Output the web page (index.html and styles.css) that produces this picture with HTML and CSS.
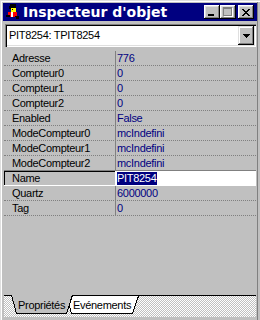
FILE: index.html
```html
<!DOCTYPE html>
<html lang="fr">
<head>
  <meta charset="UTF-8">
  <title>Inspecteur d'objet</title>
  <link rel="stylesheet" href="styles.css">
</head>
<body>
  <div class="window">
    <div class="titlebar">
      <svg class="app-icon" width="16" height="16" viewBox="0 0 16 16" shape-rendering="crispEdges">
        <rect x="6" y="0" width="6" height="4" fill="#000"/>
        <rect x="5" y="2" width="2" height="3" fill="#000"/>
        <rect x="7" y="4" width="5" height="4" fill="#ff0"/>
        <rect x="8" y="5" width="1" height="1" fill="#000"/>
        <rect x="4" y="8" width="9" height="5" fill="#f00"/>
        <rect x="7" y="8" width="2" height="5" fill="#fff"/>
        <rect x="2" y="11" width="4" height="2" fill="#000"/>
        <rect x="11" y="12" width="4" height="3" fill="#000"/>
        <rect x="6" y="13" width="6" height="3" fill="#000080"/>
      </svg>
      <span class="title">Inspecteur d'objet</span>
      <div class="caption-buttons">
        <div class="cap-btn"><span class="min-glyph"></span></div>
        <div class="cap-btn"><span class="max-glyph"></span></div>
        <div class="cap-btn close">
          <svg width="8" height="7" viewBox="0 0 8 7" shape-rendering="crispEdges">
            <path d="M0 0h2v1h-2zM6 0h2v1h-2zM1 1h2v1h-2zM5 1h2v1h-2zM2 2h4v1h-4zM3 3h2v1h-2zM2 4h4v1h-4zM1 5h2v1h-2zM5 5h2v1h-2zM0 6h2v1h-2zM6 6h2v1h-2z" fill="#000"/>
          </svg>
        </div>
      </div>
    </div>

    <div class="combo">
      <span class="combo-text">PIT8254: TPIT8254</span>
      <div class="combo-btn">
        <svg width="7" height="4" viewBox="0 0 7 4" shape-rendering="crispEdges">
          <path d="M0 0h7v1h-7zM1 1h5v1h-5zM2 2h3v1h-3zM3 3h1v1h-1z" fill="#000"/>
        </svg>
      </div>
    </div>

    <div class="grid">
      <div class="row"><span class="prop">Adresse</span><span class="val">776</span></div>
      <div class="row"><span class="prop">Compteur0</span><span class="val">0</span></div>
      <div class="row"><span class="prop">Compteur1</span><span class="val">0</span></div>
      <div class="row"><span class="prop">Compteur2</span><span class="val">0</span></div>
      <div class="row"><span class="prop">Enabled</span><span class="val">False</span></div>
      <div class="row"><span class="prop">ModeCompteur0</span><span class="val">mcIndefini</span></div>
      <div class="row"><span class="prop">ModeCompteur1</span><span class="val">mcIndefini</span></div>
      <div class="row"><span class="prop">ModeCompteur2</span><span class="val">mcIndefini</span></div>
      <div class="row selected"><span class="prop">Name</span><span class="val"><span class="sel">PIT8254</span></span></div>
      <div class="row"><span class="prop">Quartz</span><span class="val">6000000</span></div>
      <div class="row"><span class="prop">Tag</span><span class="val">0</span></div>
    </div>

    <div class="tabs">
      <svg class="tab-shapes" width="252" height="22" viewBox="0 0 252 22" shape-rendering="crispEdges">
        <rect x="0" y="0" width="252" height="1" fill="#000"/>
        <polygon points="62,1 135,1 129,19 67,19" fill="#fff"/>
        <polyline points="62.5,1 67.5,18.5 128.5,18.5 134.5,1" fill="none" stroke="#000"/>
        <polygon points="7,0 69,0 63,19 12,19" fill="#c0c0c0"/>
        <polyline points="7.5,0 12.5,18.5 62.5,18.5 68.5,0" fill="none" stroke="#000"/>
      </svg>
      <span class="tab first">Propriétés</span>
      <span class="tab">Evénements</span>
    </div>
  </div>
</body>
</html>
```

FILE: styles.css
```css
body {
  margin: 0;
  background: #c0c0c0;
  font-family: "Liberation Sans", Arial, sans-serif;
  font-size: 11px;
  letter-spacing: -0.3px;
  color: #000;
}

.window {
  width: 260px;
  height: 320px;
  box-sizing: border-box;
  padding: 3px;
  display: flex;
  flex-direction: column;
  background: #c0c0c0;
  box-shadow: inset 1px 1px 0 #dfdfdf, inset 2px 2px 0 #fff,
              inset -2px 0 0 #c0c0c0, inset -3px 0 0 #808080;
}

/* barre de titre */
.titlebar {
  height: 18px;
  display: flex;
  align-items: center;
  padding: 0 3px 0 1px;
  background: #000080;
  color: #fff;
}

.app-icon {
  margin-right: 3px;
  flex: none;
}

.title {
  font-family: "DejaVu Sans", sans-serif;
  font-weight: bold;
  font-size: 14px;
  letter-spacing: 0;
  line-height: 18px;
  white-space: nowrap;
}

.caption-buttons {
  margin-left: auto;
  display: flex;
}

.cap-btn {
  width: 16px;
  height: 14px;
  box-sizing: border-box;
  background: #c0c0c0;
  box-shadow: inset -1px -1px 0 #000, inset 1px 1px 0 #fff,
              inset -2px -2px 0 #808080, inset 2px 2px 0 #dfdfdf;
  position: relative;
  display: flex;
  align-items: center;
  justify-content: center;
}

.cap-btn.close {
  margin-left: 2px;
}

.min-glyph {
  position: absolute;
  left: 4px;
  top: 9px;
  width: 6px;
  height: 2px;
  background: #000;
}

.max-glyph {
  position: absolute;
  left: 3px;
  top: 2px;
  width: 9px;
  height: 9px;
  box-sizing: border-box;
  border: 1px solid #808080;
  border-top-width: 2px;
  box-shadow: 1px 1px 0 #fff;
}

/* liste des composants */
.combo {
  height: 23px;
  margin: 3px 1px 0 2px;
  padding: 2px;
  box-sizing: border-box;
  display: flex;
  background: #fff;
  box-shadow: inset 1px 1px 0 #808080, inset 2px 2px 0 #000,
              inset -1px -1px 0 #fff, inset -2px -2px 0 #dfdfdf;
}

.combo-text {
  flex: 1;
  padding-left: 2px;
  line-height: 19px;
}

.combo-btn {
  width: 16px;
  height: 19px;
  box-sizing: border-box;
  background: #c0c0c0;
  box-shadow: inset -1px -1px 0 #000, inset 1px 1px 0 #dfdfdf,
              inset -2px -2px 0 #808080, inset 2px 2px 0 #fff;
  display: flex;
  align-items: center;
  justify-content: center;
}

/* grille des propriétés */
.grid {
  flex: 1;
  margin: 0 1px;
  padding-top: 4px;
}

.row {
  display: flex;
  height: 15px;
  box-sizing: border-box;
  border-bottom: 1px dotted #808080;
  line-height: 14px;
}

.prop {
  width: 112px;
  box-sizing: border-box;
  padding-left: 8px;
  border-right: 1px solid #808080;
  white-space: nowrap;
}

.val {
  flex: 1;
  padding-left: 1px;
  color: #000080;
  white-space: nowrap;
}

.row.selected {
  height: 16px;
  margin-top: -1px;
  border-top: 1px solid #808080;
  border-bottom: 1px solid #fff;
  box-shadow: inset 1px 1px 0 #000;
}

.row.selected .prop {
  border-right: 1px solid #fff;
}

.row.selected .val {
  background: #fff;
}

.sel {
  display: inline-block;
  background: #000080;
  color: #fff;
  line-height: 13px;
  padding-right: 1px;
}

/* onglets */
.tabs {
  position: relative;
  height: 22px;
  margin: 0 1px;
  display: flex;
  background: repeating-conic-gradient(#fff 0 25%, #c0c0c0 0 50%) 0 0 / 2px 2px;
}

.tab-shapes {
  position: absolute;
  left: 0;
  top: 0;
}

.tab {
  position: relative;
  padding-top: 3px;
  line-height: 14px;
  white-space: nowrap;
}

.tab.first {
  margin-left: 14px;
  width: 55px;
}
```
